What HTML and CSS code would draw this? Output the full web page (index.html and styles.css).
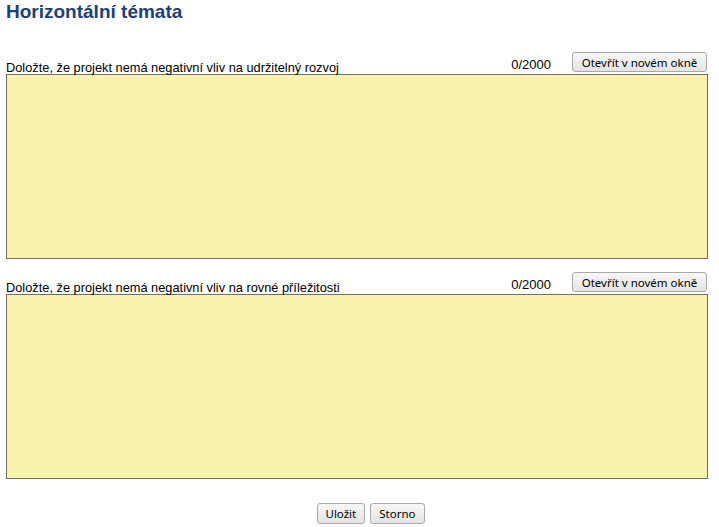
FILE: index.html
```html
<!DOCTYPE html>
<html lang="cs">
<head>
  <meta charset="UTF-8">
  <title>Horizontální témata</title>
  <link rel="stylesheet" href="styles.css">
</head>
<body>
  <h1 class="title">Horizontální témata</h1>

  <div class="field first">
    <div class="field-head">
      <label class="field-label">Doložte, že projekt nemá negativní vliv na udržitelný rozvoj</label>
      <span class="counter">0/2000</span>
      <button class="btn btn-open">Otevřít v novém okně</button>
    </div>
    <textarea class="field-text"></textarea>
  </div>

  <div class="field">
    <div class="field-head">
      <label class="field-label">Doložte, že projekt nemá negativní vliv na rovné příležitosti</label>
      <span class="counter">0/2000</span>
      <button class="btn btn-open">Otevřít v novém okně</button>
    </div>
    <textarea class="field-text"></textarea>
  </div>

  <div class="actions">
    <button class="btn">Uložit</button>
    <button class="btn">Storno</button>
  </div>
</body>
</html>
```

FILE: styles.css
```css
body {
  margin: 0;
  padding: 2px 12px 0 6px;
  background: #fff;
  color: #000;
  font-family: "Liberation Sans", Arial, sans-serif;
  font-size: 13px;
}
.title {
  margin: 0;
  font-size: 19px;
  line-height: 20px;
  font-weight: bold;
  color: #1b3f78;
}
.field {
  margin-top: 13px;
}
.field.first {
  margin-top: 30px;
}
.field-head {
  display: flex;
  align-items: flex-end;
  height: 22px;
}
.field-label {
  flex: 1;
  font-size: 12.8px;
  line-height: 13px;
}
.counter {
  margin-right: 21px;
  line-height: 13px;
  margin-bottom: 3px;
}
.btn {
  font-family: "Noto Sans", "Segoe UI", sans-serif;
  font-size: 11.5px;
  height: 20px;
  padding: 0 8px;
  border: 1px solid #a9a9a9;
  border-radius: 3px;
  background: linear-gradient(#f7f7f7, #e4e4e4);
  color: #000;
}
.btn-open {
  width: 135px;
  padding: 0;
  margin-bottom: 2px;
}
.field-text {
  display: block;
  box-sizing: border-box;
  width: 702px;
  height: 185px;
  margin: 0;
  border: 1px solid #6f6f6f;
  background: #fbf2ad;
  resize: none;
}
.actions {
  display: flex;
  justify-content: center;
  gap: 5px;
  margin-top: 24px;
  padding-left: 28px;
}
.actions .btn {
  height: 21px;
  padding: 0 8px;
}
```
